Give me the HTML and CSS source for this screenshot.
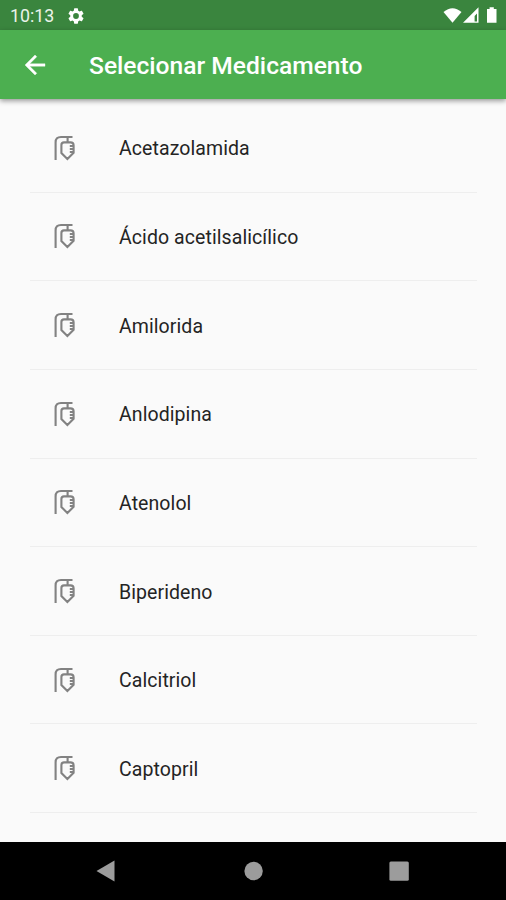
FILE: index.html
```html
<!DOCTYPE html>
<html lang="pt-BR">
<head>
<meta charset="utf-8">
<title>Selecionar Medicamento</title>
<link rel="stylesheet" href="styles.css">
</head>
<body>
<svg class="defs" width="0" height="0" aria-hidden="true">
  <symbol id="drip" viewBox="0 0 26 30">
    <path d="M4.6 27V9.4Q4.6 4 10 4H21.5M16.6 4V9M13 9.4H19.5Q22.6 9.4 22.6 12.2V19.8L16.4 26L10.4 20V12Q10.4 9.4 13 9.4M18.8 13H22.6M18.8 16H22.6M18.8 19H22.6" fill="none" stroke="currentColor" stroke-width="2.1"/>
  </symbol>
</svg>
<div class="screen">
  <div class="status">
    <span class="time">10:13</span>
    <svg class="gear" viewBox="2 2 20 20"><path fill="#fff" fill-rule="evenodd" d="M19.14 12.94c.04-.3.06-.61.06-.94s-.02-.64-.07-.94l2.03-1.58a.49.49 0 0 0 .12-.61l-1.92-3.32a.49.49 0 0 0-.59-.22l-2.39.96a7 7 0 0 0-1.62-.94l-.36-2.54A.48.48 0 0 0 13.92 2.4h-3.84a.48.48 0 0 0-.47.41l-.36 2.54a7 7 0 0 0-1.62.94l-2.39-.96a.48.48 0 0 0-.59.22L2.74 8.87a.48.48 0 0 0 .12.61l2.03 1.58a6 6 0 0 0 0 1.88l-2.03 1.58a.49.49 0 0 0-.12.61l1.92 3.32c.12.22.37.29.59.22l2.39-.96c.5.38 1.03.7 1.62.94l.36 2.54c.05.24.24.41.48.41h3.84c.24 0 .44-.17.47-.41l.36-2.54a7 7 0 0 0 1.62-.94l2.39.96c.22.08.47 0 .59-.22l1.92-3.32a.48.48 0 0 0-.12-.61zM12 15.6a3.6 3.6 0 1 1 0-7.2 3.6 3.6 0 0 1 0 7.2z"/></svg>
    <svg class="signals" viewBox="0 0 58 20">
      <path fill="#fff" d="M.5 6Q9.5-1.6 18.5 6L9.5 16.8Z"/>
      <path fill="#fff" fill-rule="evenodd" d="M20 16.8L35.5 1.3V16.8ZM31.6 15.4H34V7.5L31.6 10Z"/>
      <path fill="#fff" d="M44 3H46.6V1.3H50.8V3H53.5V16.8H44Z"/>
    </svg>
  </div>
  <header class="appbar">
    <svg class="back" viewBox="0 0 24 24"><path fill="#fff" stroke="#fff" stroke-width=".3" d="M20 11H7.83l5.59-5.59L12 4l-8 8 8 8 1.41-1.41L7.83 13H20z"/></svg>
    <h1>Selecionar Medicamento</h1>
  </header>
  <main class="list">
    <div class="row"><svg class="drip"><use href="#drip"/></svg><span>Acetazolamida</span></div>
    <div class="row"><svg class="drip"><use href="#drip"/></svg><span>Ácido acetilsalicílico</span></div>
    <div class="row"><svg class="drip"><use href="#drip"/></svg><span>Amilorida</span></div>
    <div class="row"><svg class="drip"><use href="#drip"/></svg><span>Anlodipina</span></div>
    <div class="row"><svg class="drip"><use href="#drip"/></svg><span>Atenolol</span></div>
    <div class="row"><svg class="drip"><use href="#drip"/></svg><span>Biperideno</span></div>
    <div class="row"><svg class="drip"><use href="#drip"/></svg><span>Calcitriol</span></div>
    <div class="row"><svg class="drip"><use href="#drip"/></svg><span>Captopril</span></div>
  </main>
  <nav class="navbar">
    <svg viewBox="0 0 24 24"><path fill="#9c9c9c" d="M2.5 12L20.5 1.5V22.5Z"/></svg>
    <svg viewBox="0 0 24 24"><circle cx="12.6" cy="12" r="9.2" fill="#9c9c9c"/></svg>
    <svg viewBox="0 0 24 24"><rect x="2.4" y="2.4" width="19.4" height="19.4" rx="1.5" fill="#9c9c9c"/></svg>
  </nav>
</div>
</body>
</html>
```
FILE: styles.css
```css
* { box-sizing: border-box; }
body { margin: 0; font-family: Roboto, "Liberation Sans", sans-serif; }
svg { display: block; flex: none; }
.defs { position: absolute; }
.screen {
  width: 506px;
  height: 900px;
  display: flex;
  flex-direction: column;
  background: #fafafa;
  overflow: hidden;
}
.status {
  height: 30px;
  flex: none;
  display: flex;
  align-items: center;
  padding: 1px 5px 0 10px;
  background: #3a853e;
  color: #fff;
}
.time { width: 58px; font-size: 17.8px; line-height: 30px; color: #eaf3ea; }
.gear { width: 16px; height: 16px; }
.signals { width: 58px; height: 20px; margin-left: auto; }
.appbar {
  height: 69px;
  flex: none;
  display: flex;
  align-items: center;
  padding-left: 20px;
  background: #4caf50;
  box-shadow: 0 2px 5px rgba(0, 0, 0, .4);
}
.back { width: 30px; height: 30px; }
h1 {
  margin: 2px 0 0 39px;
  font-size: 24.6px;
  line-height: 30px;
  font-weight: 500;
  color: #fff;
  white-space: nowrap;
}
.list { flex: 1; padding: 5px 29px 0 30px; }
.row {
  height: 88.65px;
  display: flex;
  align-items: center;
  padding-left: 21px;
  border-bottom: 1px solid #eeeeee;
  font-size: 19.5px;
  letter-spacing: .08px;
  color: #242424;
}
.row span { padding-top: 2px; }
.drip { width: 26px; height: 30px; margin-right: 42px; color: #828282; }
.navbar {
  height: 58px;
  flex: none;
  display: flex;
  justify-content: space-between;
  align-items: center;
  padding: 0 95px 0 94px;
  background: #000;
}
.navbar svg { width: 24px; height: 24px; }
```
